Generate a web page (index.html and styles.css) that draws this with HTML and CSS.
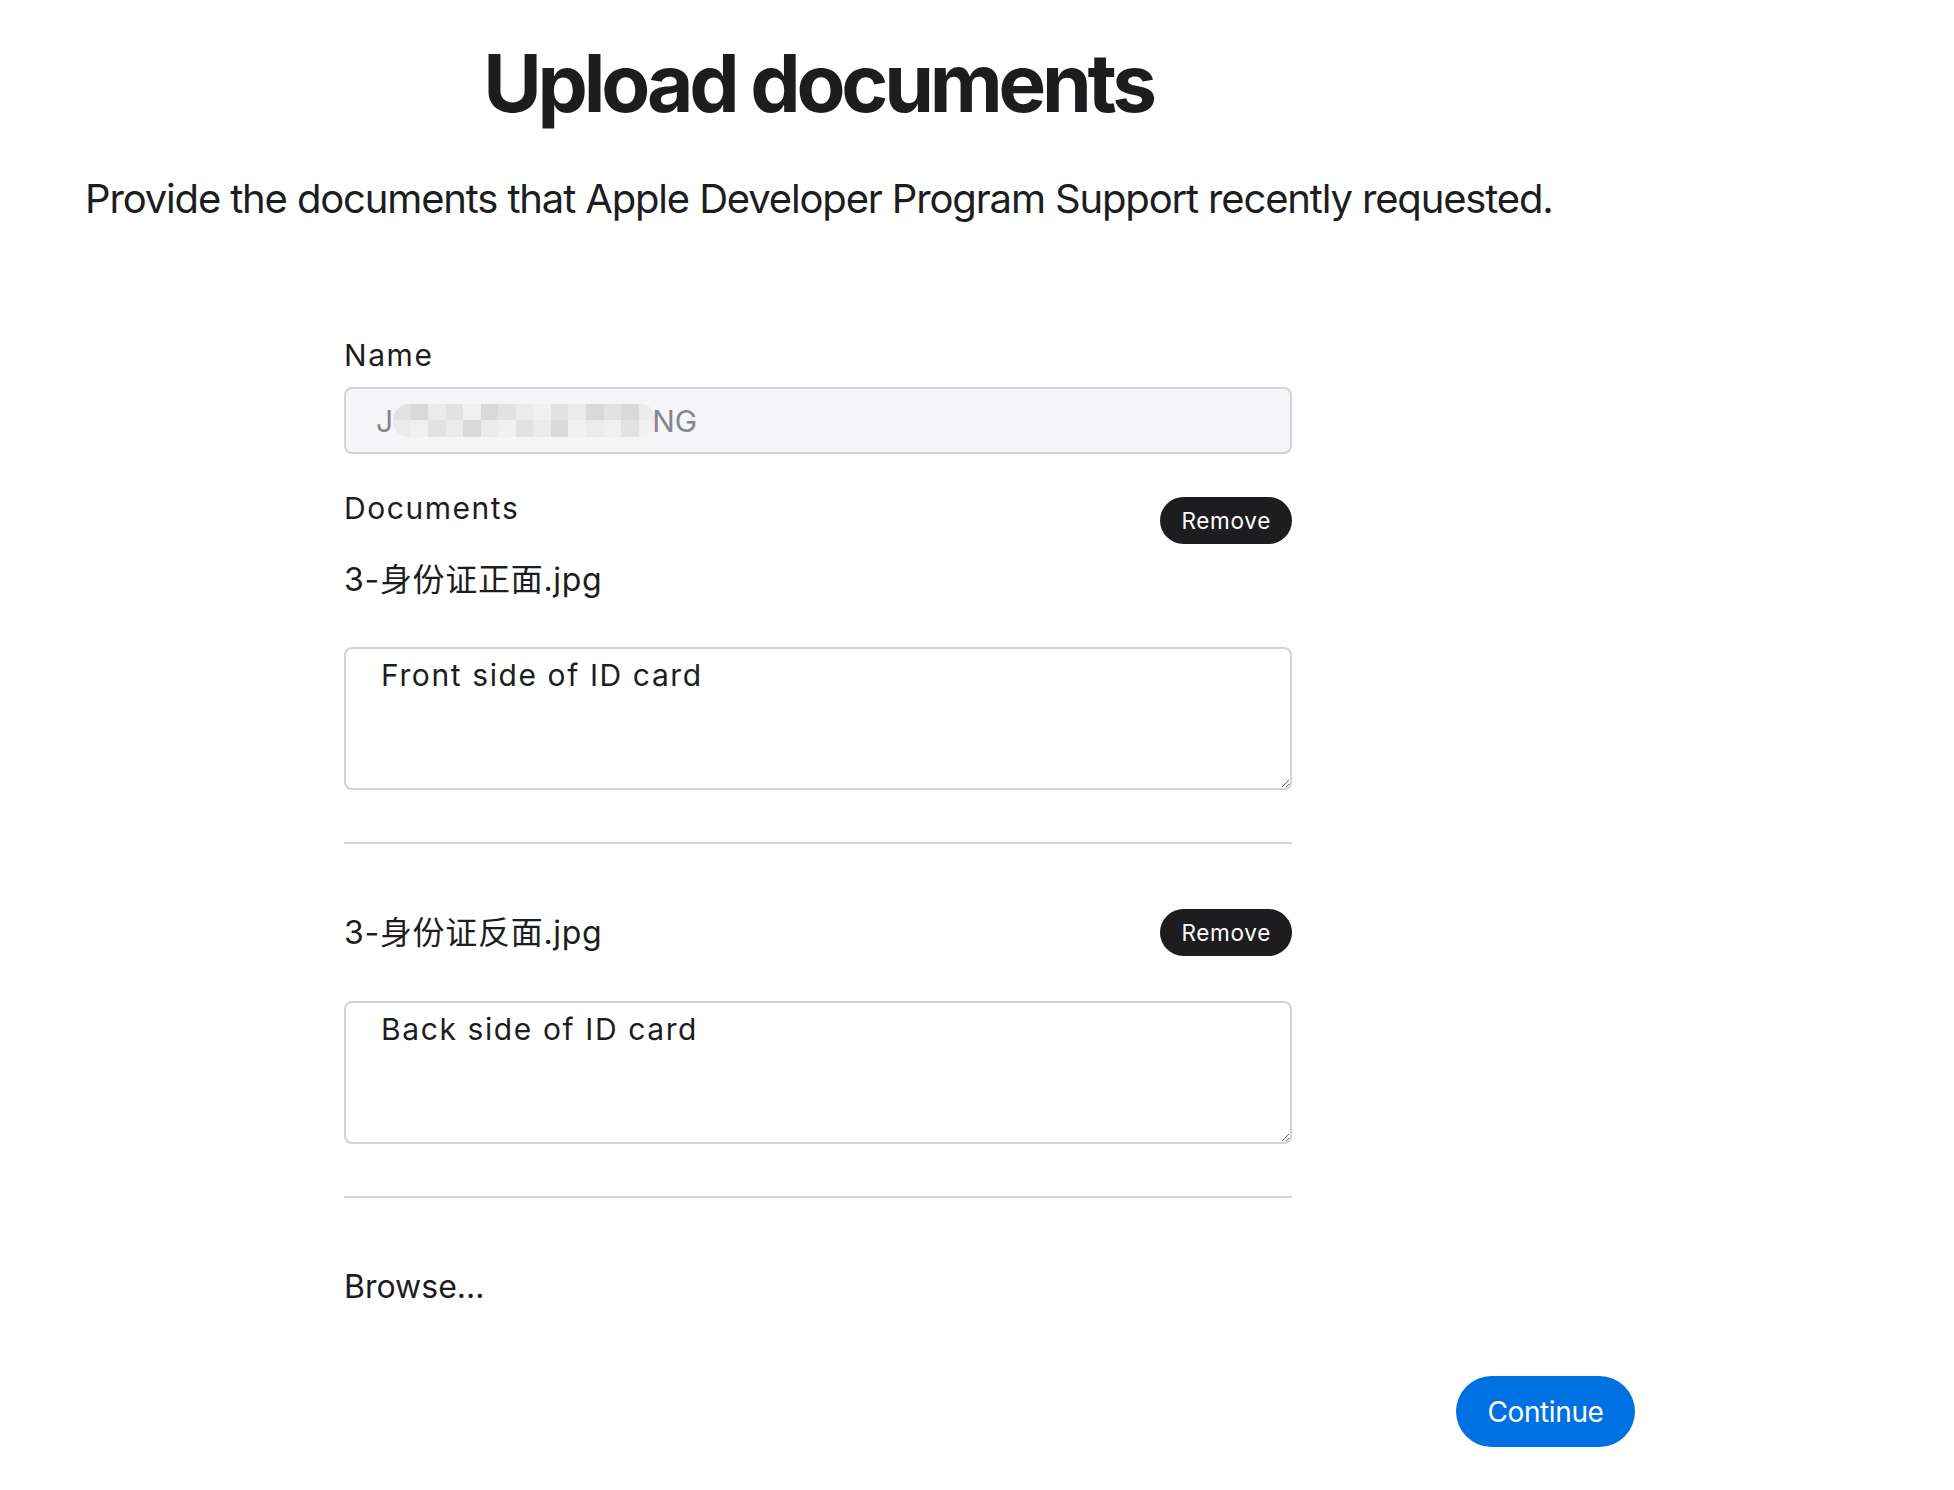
FILE: index.html
```html
<!DOCTYPE html>
<html lang="en">
<head>
<meta charset="utf-8">
<title>Upload documents</title>
<link rel="stylesheet" href="styles.css">
</head>
<body>
<main class="page">
  <h1 class="title">Upload documents</h1>
  <p class="lead">Provide the documents that Apple Developer Program Support recently requested.</p>
  <form class="form">
    <label class="label" for="name">Name</label>
    <div class="name-field" id="name">
      <span class="name-text">J</span>
      <span class="mosaic">
        <i class="m2"></i><i class="m1"></i><i class="m3"></i><i class="m2"></i><i class="m4"></i><i class="m1"></i><i class="m2"></i><i class="m3"></i><i class="m4"></i><i class="m2"></i><i class="m3"></i><i class="m1"></i><i class="m2"></i><i class="m1"></i><i class="m3"></i>
        <i class="m3"></i><i class="m4"></i><i class="m2"></i><i class="m3"></i><i class="m1"></i><i class="m3"></i><i class="m4"></i><i class="m2"></i><i class="m3"></i><i class="m1"></i><i class="m4"></i><i class="m3"></i><i class="m4"></i><i class="m2"></i><i class="m4"></i>
      </span>
      <span class="name-text">NG</span>
    </div>

    <div class="doc-head">
      <span class="label">Documents</span>
      <button type="button" class="remove">Remove</button>
    </div>
    <div class="filename first">3-身份证正面.jpg</div>
    <textarea class="desc">Front side of ID card</textarea>
    <hr class="divider">

    <div class="doc-row">
      <span class="filename">3-身份证反面.jpg</span>
      <button type="button" class="remove">Remove</button>
    </div>
    <textarea class="desc second">Back side of ID card</textarea>
    <hr class="divider">

    <div class="browse">Browse...</div>
  </form>
  <div class="actions">
    <button type="button" class="continue">Continue</button>
  </div>
</main>
</body>
</html>
```

FILE: styles.css
```css
html, body {
  margin: 0;
  padding: 0;
  background: #ffffff;
}

body {
  font-family: Inter, "Noto Sans CJK SC", sans-serif;
  color: #1d1d1f;
}

.page {
  width: 1550px;
  padding: 35px 0 40px 85px;
}

.title {
  margin: 0 0 0 259px;
  width: 948px;
  text-align: center;
  font-size: 80px;
  line-height: 96px;
  font-weight: 700;
  letter-spacing: -4.2px;
}

.lead {
  margin: 44px 0 0;
  font-size: 40px;
  line-height: 48px;
  font-weight: 400;
  letter-spacing: -1.15px;
  white-space: nowrap;
}

.form {
  margin: 114px 0 0 259px;
  width: 948px;
  display: flex;
  flex-direction: column;
}

.label {
  font-size: 30px;
  line-height: 36px;
  letter-spacing: 1.55px;
}

.name-field {
  margin-top: 14px;
  height: 67px;
  box-sizing: border-box;
  border: 2px solid #d2d2d7;
  border-radius: 8px;
  background: #f5f5f7;
  padding-left: 30px;
  display: flex;
  align-items: center;
  font-size: 30px;
  color: #86868b;
}

.mosaic {
  display: grid;
  grid-template-columns: repeat(15, 1fr);
  grid-template-rows: 16px 17px;
  width: 263px;
  height: 33px;
  margin: 0 -4px 0 0;
  border-radius: 16px;
  overflow: hidden;
}

.mosaic i {
  display: block;
}

.m1 { background: #d9d9d9; }
.m2 { background: #e2e2e2; }
.m3 { background: #ebebeb; }
.m4 { background: #f0f0f0; }

.doc-head {
  margin-top: 36px;
  display: flex;
  justify-content: space-between;
  align-items: flex-start;
}

.doc-head .remove {
  margin-top: 7px;
}

.remove {
  height: 47px;
  padding: 0 21px;
  border: 0;
  border-radius: 24px;
  background: #1d1d1f;
  color: #ffffff;
  font-family: Inter, sans-serif;
  font-size: 22.5px;
  letter-spacing: 0.7px;
  cursor: pointer;
}

.filename {
  font-size: 32px;
  line-height: 38px;
  letter-spacing: 0.7px;
}

.filename.first {
  margin-top: 17px;
}

.desc {
  display: block;
  margin-top: 48px;
  width: 100%;
  height: 143px;
  box-sizing: border-box;
  border: 2px solid #d2d2d7;
  border-radius: 8px;
  padding: 8px 35px;
  font-family: Inter, sans-serif;
  font-size: 30px;
  line-height: 36px;
  letter-spacing: 1.6px;
  color: #1d1d1f;
  background: #ffffff;
  resize: vertical;
  outline: none;
}

.desc.second {
  margin-top: 45px;
}

.divider {
  margin: 52px 0 0;
  border: 0;
  height: 2px;
  background: #d2d2d7;
}

.doc-row {
  margin-top: 65px;
  display: flex;
  justify-content: space-between;
  align-items: center;
}

.browse {
  margin-top: 70px;
  font-size: 32px;
  line-height: 38px;
}

.actions {
  margin-top: 70px;
  display: flex;
  justify-content: flex-end;
}

.continue {
  width: 179px;
  height: 71px;
  border: 0;
  border-radius: 36px;
  background: #0071e3;
  color: #ffffff;
  font-family: Inter, sans-serif;
  font-size: 28px;
  letter-spacing: -0.4px;
  cursor: pointer;
}
```
